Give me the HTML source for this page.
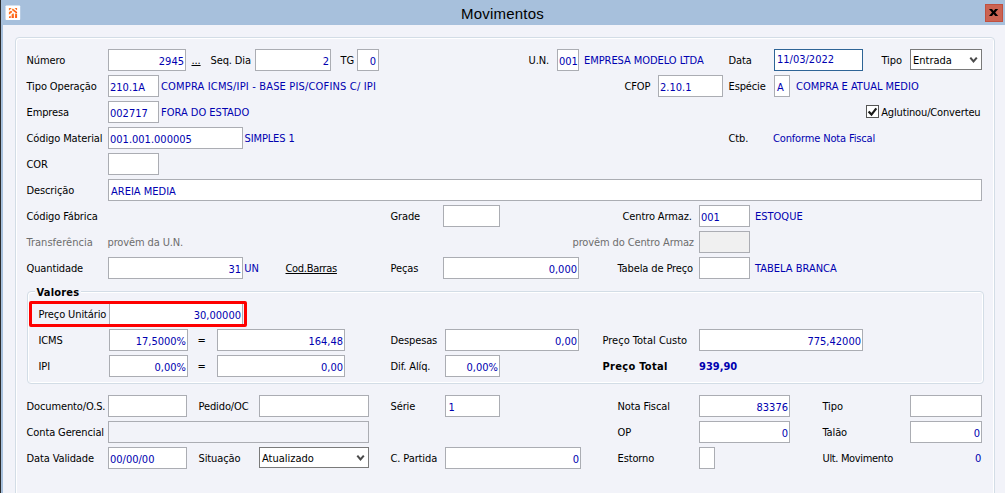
<!DOCTYPE html>
<html lang="pt-BR">
<head>
<meta charset="utf-8">
<title>Movimentos</title>
<style>
html,body{margin:0;padding:0;}
body{width:1005px;height:493px;overflow:hidden;position:relative;background:#f2f3f9;
 font-family:"DejaVu Sans Condensed","Liberation Sans",sans-serif;font-size:11px;color:#000;}
#win{position:absolute;left:0;top:0;width:1005px;height:493px;background:#a7c0dc;overflow:hidden;}
#lb{position:absolute;left:0;top:0;width:1px;height:493px;background:#2b2b2b;}
#client{position:absolute;left:3px;top:25px;width:1002px;height:468px;background:#f2f3f9;}
#title{position:absolute;left:0;top:4px;letter-spacing:0.2px;width:1005px;text-align:center;font-family:"Liberation Sans",sans-serif;font-size:15px;line-height:20px;color:#000;}
#icon{position:absolute;left:5px;top:5px;width:16px;height:16px;}
#close{position:absolute;left:985px;top:4px;width:16px;height:16px;background:#cb6352;border:1px solid #c0503f;}
.l,.v,.b{position:absolute;white-space:nowrap;line-height:14px;height:14px;}
.l{color:#000;letter-spacing:-0.12px;margin-left:0.5px;}
.g{color:#6d6d6d;}
.v{color:#0000b0;}
.i{position:absolute;height:20px;border:1px solid #abadb3;background:#fff;color:#0000b0;line-height:21px;box-sizing:content-box;white-space:nowrap;overflow:hidden;}
.i span{position:absolute;top:1px;}
.i .L{left:1px;}
.i .R{right:1px;}
.d{background:#f0f0f0;}
.d2{background:transparent;}
.gb{position:absolute;border:1px solid #d3dde6;border-radius:4px;box-shadow:inset 1px 1px 0 #fff, inset -1px -1px 0 #fff;}
.u{text-decoration:underline;}
.bold{font-weight:bold;}
</style>
</head>
<body>
<div id="win">
 <div id="lb"></div>
 <div id="title">Movimentos</div>
 <div id="icon"><svg style="display:block" width="16" height="16" viewBox="0 0 16 16"><defs><linearGradient id="og" x1="0" y1="0" x2="1" y2="1"><stop offset="0" stop-color="#ff8c2e"/><stop offset="1" stop-color="#ff4606"/></linearGradient></defs><rect x="0.55" y="0.4" width="14.65" height="14.7" rx="0.8" fill="#fff"/><g fill="url(#og)"><path d="M3.9 2.9 L6.7 2.9 L3.9 5.7 Z"/><path d="M9.5 2.95 L12.05 2.95 L12.05 5.4 Z"/><path d="M7.1 3.84 L8.24 3.84 L12.08 7.1 L12.08 8.1 L10.8 8.1 L6.82 4.97 Z"/><path d="M3.9 7.0 L6.0 5.7 L7.1 6.4 L7.1 7.2 L3.9 9.8 Z"/><path d="M3.98 11.5 L5.69 10.7 L5.69 12.93 L3.98 12.93 Z"/><path d="M6.54 9.38 L7.68 8.38 L8.81 8.38 L8.81 12.93 L6.54 12.93 Z"/><path d="M9.95 8.52 L12.08 8.52 L12.08 12.93 L9.95 12.93 Z"/></g></svg></div>
 <div id="close"><svg style="display:block" width="16" height="16" viewBox="0 0 16 16"><path d="M3 4 L6 4 L7.6 5.9 L9.2 4 L12.2 4 L9.2 7.5 L12.2 11 L9.2 11 L7.6 9.1 L6 11 L3 11 L6 7.5 Z" fill="#000"/></svg></div>
 <div id="client"></div>
 <div class="gb" style="left:15px;top:37px;width:978px;height:470px;"></div>

 <!-- row 1 -->
 <div class="l" style="left:26px;top:54px;">Número</div>
 <div class="i" style="left:108px;top:49px;width:76px;"><span class="R">2945</span></div>
 <div class="l u" style="left:191px;top:54px;">...</div>
 <div class="l" style="left:210px;top:54px;">Seq. Dia</div>
 <div class="i" style="left:255px;top:49px;width:74px;"><span class="R">2</span></div>
 <div class="l" style="left:340px;top:54px;">TG</div>
 <div class="i" style="left:357px;top:49px;width:20px;"><span class="R" style="right:2px">0</span></div>
 <div class="l" style="left:528px;top:54px;">U.N.</div>
 <div class="i" style="left:557px;top:49px;width:20px;"><span class="L" style="left:1px">001</span></div>
 <div class="v" style="left:584px;top:54px;letter-spacing:-0.06px">EMPRESA MODELO LTDA</div>
 <div class="l" style="left:728px;top:54px;">Data</div>
 <div class="i" style="left:774px;top:49px;width:87px;border-color:#2e6496;"><span class="L" style="top:-1px;left:2px">11/03/2022</span></div>
 <div class="l" style="left:881px;top:54px;">Tipo</div>
 <div class="i" style="left:910px;top:49px;width:70px;height:19px;line-height:20px;border-color:#7a7a7a;color:#000;"><span class="L" style="left:2px;top:1px">Entrada</span><svg style="position:absolute;right:3px;top:6.3px" width="9" height="8" viewBox="0 0 9 8"><path d="M1.3 1.6 L4.5 5.5 L7.8 1.6" stroke="#4a4a4a" stroke-width="2" fill="none"/></svg></div>

 <!-- row 2 -->
 <div class="l" style="left:26px;top:80px;">Tipo Operação</div>
 <div class="i" style="left:108px;top:75px;width:49px;"><span class="L">210.1A</span></div>
 <div class="v" style="left:161px;top:80px;letter-spacing:0.17px;">COMPRA ICMS/IPI - BASE PIS/COFINS C/ IPI</div>
 <div class="l" style="left:624px;top:80px;">CFOP</div>
 <div class="i" style="left:658px;top:75px;width:63px;"><span class="L">2.10.1</span></div>
 <div class="l" style="left:728px;top:80px;">Espécie</div>
 <div class="i" style="left:774px;top:75px;width:14px;"><span class="L" style="left:2px">A</span></div>
 <div class="v" style="left:796px;top:80px;">COMPRA E ATUAL MEDIO</div>

 <!-- row 3 -->
 <div class="l" style="left:26px;top:106px;">Empresa</div>
 <div class="i" style="left:108px;top:101px;width:49px;"><span class="L">002717</span></div>
 <div class="v" style="left:161px;top:106px;">FORA DO ESTADO</div>
 <div style="position:absolute;left:866px;top:105px;width:11px;height:11px;border:1px solid #555;background:#fff;"><svg style="display:block" width="11" height="11" viewBox="0 0 11 11"><path d="M1.6 5.4 L4.5 8.6 L9.3 2.4" stroke="#1a1a1a" stroke-width="2.2" fill="none"/></svg></div>
 <div class="l" style="left:880.7px;top:106px;letter-spacing:-0.15px">Aglutinou/Converteu</div>

 <!-- row 4 -->
 <div class="l" style="left:26px;top:132px;">Código Material</div>
 <div class="i" style="left:108px;top:127px;width:133px;"><span class="L">001.001.000005</span></div>
 <div class="v" style="left:244.5px;top:132px;letter-spacing:-0.12px">SIMPLES 1</div>
 <div class="l" style="left:728px;top:132px;">Ctb.</div>
 <div class="v" style="left:773px;top:132px;letter-spacing:-0.15px">Conforme Nota Fiscal</div>

 <!-- row 5 -->
 <div class="l" style="left:26px;top:158px;">COR</div>
 <div class="i" style="left:108px;top:153px;width:49px;"></div>

 <!-- row 6 -->
 <div class="l" style="left:26px;top:184px;">Descrição</div>
 <div class="i" style="left:108px;top:179px;width:872px;"><span class="L" style="left:2px">AREIA MEDIA</span></div>

 <!-- row 7 -->
 <div class="l" style="left:26px;top:210px;">Código Fábrica</div>
 <div class="l" style="left:390px;top:210px;">Grade</div>
 <div class="i" style="left:443px;top:205px;width:55px;"></div>
 <div class="l" style="left:622px;top:210px;">Centro Armaz.</div>
 <div class="i" style="left:699px;top:205px;width:49px;"><span class="L">001</span></div>
 <div class="v" style="left:755px;top:210px;">ESTOQUE</div>

 <!-- row 8 -->
 <div class="l g" style="left:26px;top:236px;letter-spacing:0.02px">Transferência</div>
 <div class="l g" style="left:107px;top:236px;">provêm da U.N.</div>
 <div class="l g" style="left:572px;top:236px;">provêm do Centro Armaz</div>
 <div class="i d" style="left:699px;top:231px;width:49px;"></div>

 <!-- row 9 -->
 <div class="l" style="left:26px;top:262px;">Quantidade</div>
 <div class="i" style="left:108px;top:257px;width:133px;"><span class="R">31</span></div>
 <div class="v" style="left:244.2px;top:262px;">UN</div>
 <div class="l u" style="left:285px;top:262px;letter-spacing:-0.3px">Cod.Barras</div>
 <div class="l" style="left:390px;top:262px;">Peças</div>
 <div class="i" style="left:443px;top:257px;width:134px;"><span class="R">0,000</span></div>
 <div class="l" style="left:617px;top:262px;">Tabela de Preço</div>
 <div class="i" style="left:699px;top:257px;width:49px;"></div>
 <div class="v" style="left:755px;top:262px;">TABELA BRANCA</div>

 <!-- Valores group -->
 <div class="gb" style="left:27px;top:291px;width:955px;height:91px;"></div>
 <div class="l bold" style="left:34px;top:286px;background:#f2f3f9;padding:0 2px;letter-spacing:0.2px;">Valores</div>
 <div class="l" style="left:38px;top:308px;">Preço Unitário</div>
 <div class="i" style="left:109px;top:303px;width:132px;"><span class="R">30,00000</span></div>
 <div style="position:absolute;left:29px;top:301px;width:212px;height:20px;border:3px solid #fe0000;border-radius:2px;"></div>

 <div class="l" style="left:38px;top:334px;">ICMS</div>
 <div class="i" style="left:109px;top:329px;width:77px;"><span class="R" style="right:1px">17,5000%</span></div>
 <div class="l" style="left:197px;top:334px;">=</div>
 <div class="i" style="left:217px;top:329px;width:126px;"><span class="R">164,48</span></div>
 <div class="l" style="left:390px;top:334px;">Despesas</div>
 <div class="i" style="left:445px;top:329px;width:132px;"><span class="R">0,00</span></div>
 <div class="l" style="left:602px;top:334px;letter-spacing:0;">Preço Total Custo</div>
 <div class="i" style="left:699px;top:329px;width:162px;"><span class="R">775,42000</span></div>

 <div class="l" style="left:38px;top:360px;">IPI</div>
 <div class="i" style="left:109px;top:355px;width:77px;"><span class="R" style="right:1px">0,00%</span></div>
 <div class="l" style="left:197px;top:360px;">=</div>
 <div class="i" style="left:217px;top:355px;width:126px;"><span class="R">0,00</span></div>
 <div class="l" style="left:390px;top:360px;">Dif. Alíq.</div>
 <div class="i" style="left:445px;top:355px;width:53px;"><span class="R" style="right:1px">0,00%</span></div>
 <div class="l bold" style="left:602px;top:360px;letter-spacing:0.3px;">Preço Total</div>
 <div class="v bold" style="left:699px;top:360px;">939,90</div>

 <!-- bottom rows -->
 <div class="l" style="left:26px;top:400px;">Documento/O.S.</div>
 <div class="i" style="left:108px;top:395px;width:77px;"></div>
 <div class="l" style="left:198px;top:400px;">Pedido/OC</div>
 <div class="i" style="left:259px;top:395px;width:108px;"></div>
 <div class="l" style="left:390px;top:400px;">Série</div>
 <div class="i" style="left:445px;top:395px;width:53px;"><span class="L" style="left:2.5px">1</span></div>
 <div class="l" style="left:617px;top:400px;">Nota Fiscal</div>
 <div class="i" style="left:699px;top:395px;width:89px;"><span class="R">83376</span></div>
 <div class="l" style="left:822px;top:400px;">Tipo</div>
 <div class="i" style="left:910px;top:395px;width:70px;"></div>

 <div class="l" style="left:26px;top:426px;">Conta Gerencial</div>
 <div class="i d2" style="left:108px;top:421px;width:259px;"></div>
 <div class="l" style="left:617px;top:426px;">OP</div>
 <div class="i" style="left:699px;top:421px;width:89px;"><span class="R">0</span></div>
 <div class="l" style="left:822px;top:426px;">Talão</div>
 <div class="i" style="left:910px;top:421px;width:70px;"><span class="R">0</span></div>

 <div class="l" style="left:26px;top:452px;">Data Validade</div>
 <div class="i" style="left:108px;top:447px;width:77px;"><span class="L">00/00/00</span></div>
 <div class="l" style="left:198px;top:452px;">Situação</div>
 <div class="i" style="left:259px;top:447px;width:108px;height:19px;line-height:20px;border-color:#7a7a7a;color:#000;"><span class="L" style="left:2px;top:1px">Atualizado</span><svg style="position:absolute;right:3px;top:6.3px" width="9" height="8" viewBox="0 0 9 8"><path d="M1.3 1.6 L4.5 5.5 L7.8 1.6" stroke="#4a4a4a" stroke-width="2" fill="none"/></svg></div>
 <div class="l" style="left:390px;top:452px;">C. Partida</div>
 <div class="i" style="left:445px;top:447px;width:134px;"><span class="R">0</span></div>
 <div class="l" style="left:617px;top:452px;">Estorno</div>
 <div class="i" style="left:699px;top:447px;width:14px;"></div>
 <div class="l" style="left:822px;top:452px;letter-spacing:-0.35px">Ult. Movimento</div>
 <div class="v" style="left:975px;top:452px;">0</div>
</div>
</body>
</html>
